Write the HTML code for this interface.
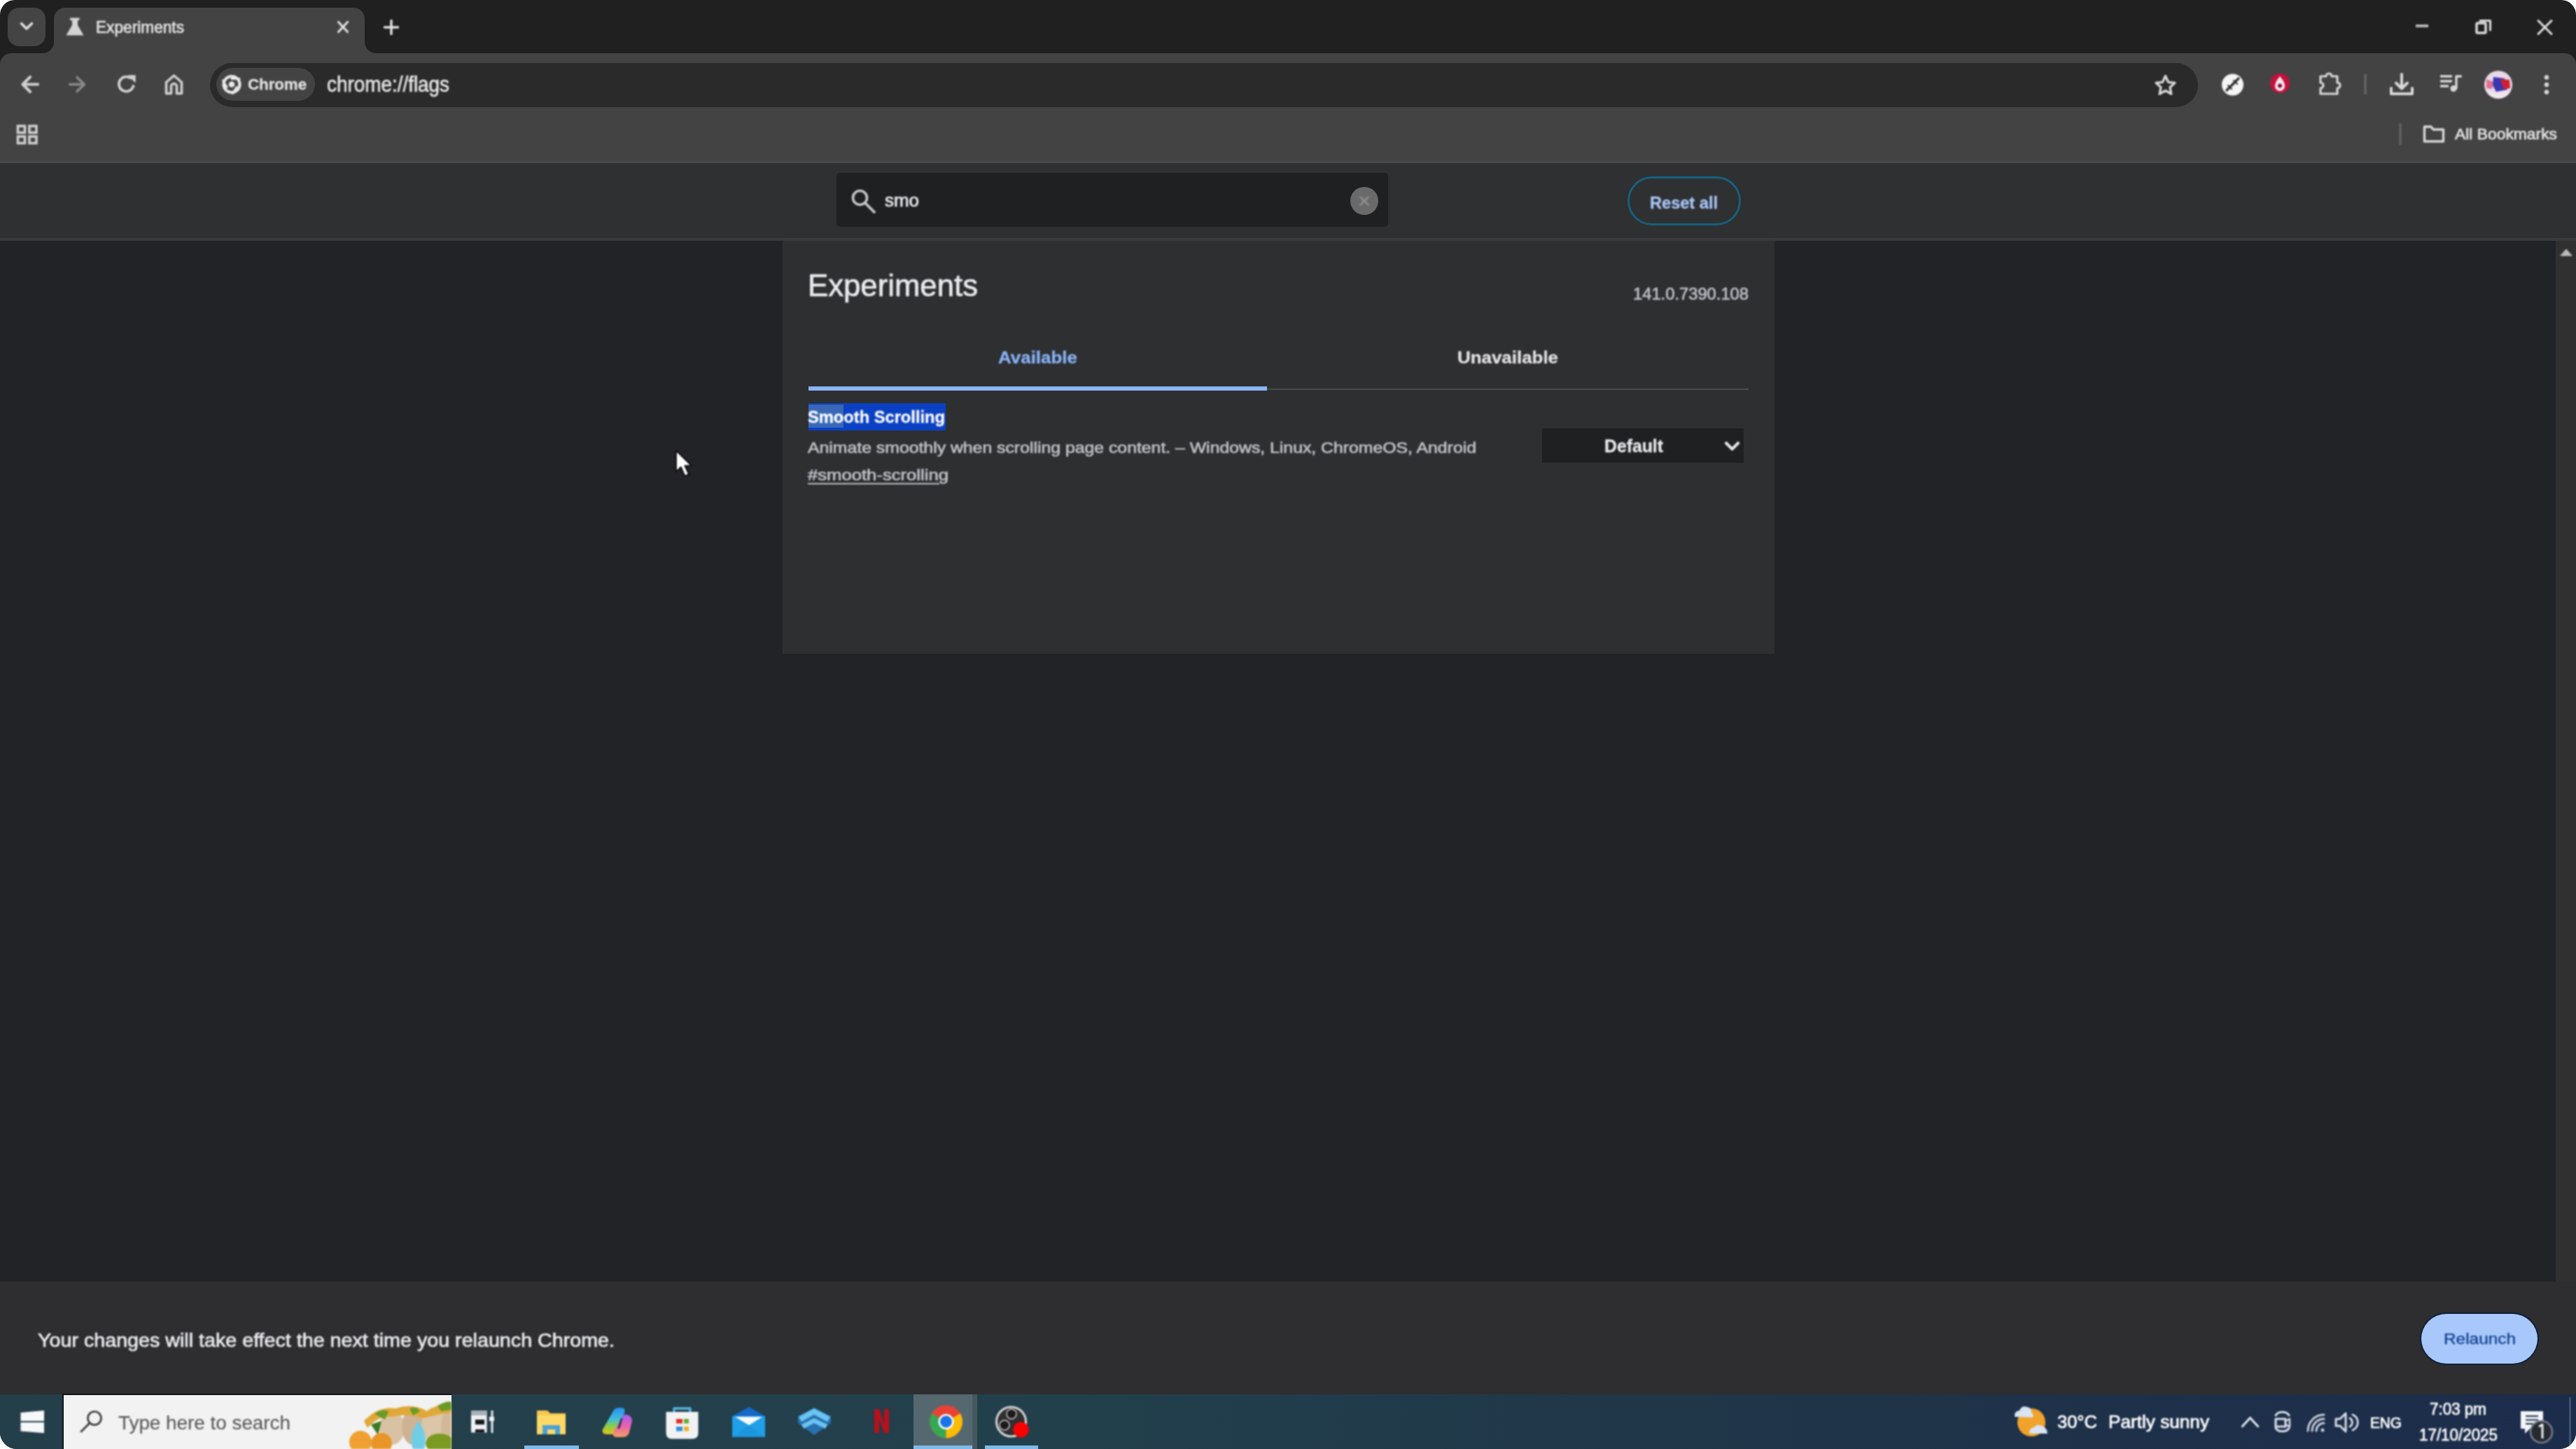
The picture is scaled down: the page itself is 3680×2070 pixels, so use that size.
<!DOCTYPE html>
<html><head><meta charset="utf-8">
<style>
html,body{margin:0;padding:0;width:3680px;height:2070px;overflow:hidden;background:#ffffff;}
.tx{position:absolute;white-space:nowrap;line-height:1;font-family:"Liberation Sans",sans-serif;transform-origin:0 0;}
.a{position:absolute;}
svg{position:absolute;overflow:visible;}
</style></head><body>
<div id="win" class="a" style="left:0;top:0;width:3680px;height:2070px;border-radius:21px 21px 24px 24px;overflow:hidden;background:#202020;">
  <!-- tab strip -->
  <!-- toolbar + bookmarks -->
  <div class="a" style="left:0;top:76px;width:3680px;height:157px;border-radius:16px 16px 0 0;background:#434343;"></div>
  <!-- active tab -->
  <div class="a" style="left:77px;top:11px;width:444px;height:70px;border-radius:16px 16px 0 0;background:#434343;"></div>
  <div class="a" style="left:61px;top:60px;width:16px;height:17px;background:#434343;"></div>
  <div class="a" style="left:45px;top:44px;width:32px;height:32px;border-radius:0 0 16px 0;background:#202020;"></div>
  <div class="a" style="left:521px;top:60px;width:16px;height:17px;background:#434343;"></div>
  <div class="a" style="left:521px;top:44px;width:32px;height:32px;border-radius:0 0 0 16px;background:#202020;"></div>
  <div class="a" style="left:11px;top:11px;width:54px;height:55px;border-radius:16px;background:#444444;"></div>
  <!-- omnibox -->
  <div class="a" style="left:300px;top:90px;width:2840px;height:63px;border-radius:32px;background:#2a2a2a;"></div>
  <div class="a" style="left:309px;top:97px;width:141px;height:47px;border-radius:24px;background:#434343;"></div>

  <!-- page header -->
  <div class="a" style="left:0;top:230px;width:3680px;height:3px;background:#484848;"></div>
  <div class="a" style="left:0;top:233px;width:3680px;height:108px;background:#2f3032;"></div>
  <div class="a" style="left:0;top:340px;width:3680px;height:3.5px;background:#39393b;"></div>
  <div class="a" style="left:1195px;top:247px;width:788px;height:77px;border-radius:5px;background:#1f2022;"></div>
  <div class="a" style="left:1929px;top:267px;width:40px;height:40px;border-radius:50%;background:#6a6a6a;"></div>
  <div class="a" style="left:2325px;top:252px;width:156px;height:64px;border-radius:36px;border:3px solid #16607e;"></div>

  <!-- body -->
  <div class="a" style="left:0;top:343.5px;width:3651px;height:1487.5px;background:#222327;"></div>
  <div class="a" style="left:3651px;top:343.5px;width:29px;height:1487.5px;background:#303030;"></div>
  <!-- card -->
  <div class="a" style="left:1118px;top:343.5px;width:1417px;height:590.5px;background:#2e2f31;"></div>
  <div class="a" style="left:1155px;top:552px;width:655px;height:6px;background:#8ab4f8;"></div>
  <div class="a" style="left:1810px;top:555px;width:688px;height:2px;background:#4a4b4e;"></div>
  <div class="a" style="left:1155px;top:576px;width:196px;height:39px;background:#0a40c2;"></div>
  <div class="a" style="left:1155px;top:578px;width:50px;height:33px;background:#3767b6;"></div>
  <div class="a" style="left:2203px;top:612px;width:288px;height:49px;background:#1f2022;"></div>

  <!-- relaunch bar -->
  <div class="a" style="left:0;top:1831px;width:3680px;height:161px;background:#2e2e30;"></div>
  <div class="a" style="left:3459px;top:1877px;width:166px;height:71px;border-radius:36px;background:#a8c7fa;box-shadow:0 0 0 2px #10203a;"></div>

  <!-- taskbar -->
  <div class="a" style="left:0;top:1992px;width:3680px;height:78px;background:linear-gradient(90deg,#243f4a 0%,#22404c 40%,#1f3448 70%,#1c2c4b 100%);"></div>
  <div class="a" style="left:89px;top:1991px;width:556px;height:79px;background:#0e1418;"></div>
  <div class="a" style="left:91px;top:1993px;width:554px;height:77px;background:#f2f2f2;"></div>
  <div class="a" style="left:1305px;top:1992px;width:84px;height:78px;background:#56686f;"></div>
  <div class="a" style="left:1305px;top:2065px;width:84px;height:5px;background:#7fbbe8;"></div>
  <div class="a" style="left:749px;top:2065px;width:78px;height:5px;background:#7fbbe8;"></div>
  <div class="a" style="left:1407px;top:2065px;width:76px;height:5px;background:#7fbbe8;"></div>
  <div class="a" style="left:3670px;top:1996px;width:3px;height:74px;background:#3c5170;"></div>
  <div class="a" style="left:1389px;top:1992px;width:7px;height:78px;background:#46585f;"></div>
</div>
<div id="fx" style="position:absolute;left:0;top:0;width:3680px;height:2070px;filter:blur(0.8px);">
<svg width="3680" height="2070" viewBox="0 0 3680 2070" style="position:absolute;left:0;top:0;">
 <g fill="none" stroke-linecap="round" stroke-linejoin="round">
  <!-- tab dropdown chevron -->
  <path d="M30.5 33.5 L38 41 L45.5 33.5" stroke="#e3e3e3" stroke-width="3.5"/>
  <!-- tab close -->
  <path d="M483.5 31.5 L496.5 45.5 M496.5 31.5 L483.5 45.5" stroke="#e0e0e0" stroke-width="3.2"/>
  <!-- new tab -->
  <path d="M559 29.5 V48.5 M549.5 39 H568.5" stroke="#e0e0e0" stroke-width="3.5"/>
  <!-- window controls -->
  <path d="M3451 37 H3469" stroke="#b8b8b8" stroke-width="4" stroke-linecap="butt"/>
  <rect x="3538" y="33" width="13" height="14" stroke="#dcdcdc" stroke-width="3.5" rx="1.5"/>
  <path d="M3543 29.5 H3557.5 V43" stroke="#dcdcdc" stroke-width="3"/>
  <path d="M3626 29.5 L3645 48.5 M3645 29.5 L3626 48.5" stroke="#e0e0e0" stroke-width="3"/>
  <!-- back / forward -->
  <path d="M54 120.5 H33 M43 110 L32.5 120.5 L43 131" stroke="#d0d0d0" stroke-width="4.2"/>
  <path d="M99.5 120.5 H120 M110 110.5 L120.5 120.5 L110 130.5" stroke="#8a8a8a" stroke-width="3.6"/>
  <!-- reload -->
  <path d="M190.5 123 A10.5 10.5 0 1 1 186.5 111.5" stroke="#d0d0d0" stroke-width="3.8"/>
  <path d="M184 108 L193 108 L193 117 Z" fill="#d0d0d0" stroke="#d0d0d0" stroke-width="1.5"/>
  <!-- home -->
  <path d="M237.5 133.5 V117.5 L248.5 108 L259.5 117.5 V133.5 H252.5 V123.5 A4 4 0 0 0 244.5 123.5 V133.5 Z" stroke="#d0d0d0" stroke-width="3.6"/>
  <!-- chrome chip logo -->
  <circle cx="331" cy="120.5" r="11.5" stroke="#e8e8e8" stroke-width="4.2"/>
  <circle cx="331" cy="120.5" r="4.3" fill="#e8e8e8" stroke="none"/>
  <path d="M331 112.5 H342 M324 124.5 L318.5 115 M338 124.5 L332.5 133.5" stroke="#e8e8e8" stroke-width="3"/>
  <!-- star -->
  <path d="M3093.5 108.5 L3097.6 117.3 L3107 118.4 L3100 124.8 L3101.9 134.2 L3093.5 129.4 L3085.1 134.2 L3087 124.8 L3080 118.4 L3089.4 117.3 Z" stroke="#d8d8d8" stroke-width="3.3"/>
  <!-- ext 1 white circle -->
  <circle cx="3189.5" cy="121" r="15.5" fill="#f4f4f4" stroke="none"/>
  <path d="M3181 129 L3185 125 M3187 123 L3192 118 M3194 116 L3198 112" stroke="#2a2a2a" stroke-width="3.2"/>
  <path d="M3183 122 L3188 127 M3191 115 L3196 120" stroke="#2a2a2a" stroke-width="2"/>
  <!-- ext 2 red -->
  <circle cx="3257" cy="119" r="14" fill="#c4103c" stroke="none"/>
  <path d="M3257 109 C3252 115 3250 119 3250 123 A7 7 0 0 0 3264 123 C3264 119 3262 115 3257 109 Z" fill="#f8e8ee" stroke="none"/>
  <circle cx="3257" cy="122.5" r="3" fill="#801030" stroke="none"/>
  <!-- puzzle -->
  <path d="M3315 109 H3323 A4 4 0 0 1 3331 109 H3339 V118 A4 4 0 0 1 3339 126 V134 H3315 V126 A4 4 0 0 0 3315 118 Z" stroke="#d8d8d8" stroke-width="3.2"/>
  <!-- separator -->
  <path d="M3379 106 V135" stroke="#6a6a6a" stroke-width="3" stroke-linecap="butt"/>
  <!-- download -->
  <path d="M3431 106 V126 M3423 118.5 L3431 126.5 L3439 118.5" stroke="#d8d8d8" stroke-width="4"/>
  <path d="M3416 126 V134 H3446 V126" stroke="#d8d8d8" stroke-width="4"/>
  <!-- media -->
  <path d="M3486 109 H3503 M3486 116 H3503 M3486 123 H3498" stroke="#d8d8d8" stroke-width="3.6" stroke-linecap="butt"/>
  <path d="M3509 126 V109 H3515.5" stroke="#d8d8d8" stroke-width="3.4"/>
  <circle cx="3505" cy="126.5" r="4.5" fill="#d8d8d8" stroke="none"/>
  <!-- avatar -->
  <circle cx="3569" cy="121" r="20" fill="#e8d8e8" stroke="none"/>
  <path d="M3551 128 A20 20 0 0 0 3587 130 L3580 131 L3565 133 Z" fill="#f0e6ee" stroke="none"/>
  <path d="M3552 113 L3562 117 L3560 127 L3552 126 Z" fill="#e07090" stroke="none"/>
  <path d="M3562 110 L3578 112 L3582 128 L3566 131 L3561 122 Z" fill="#3838b0" stroke="none"/>
  <path d="M3572 113 L3585 114 L3586 126 L3576 127 Z" fill="#d02030" stroke="none"/>
  <!-- menu dots -->
  <circle cx="3638" cy="110.5" r="3.2" fill="#d8d8d8" stroke="none"/>
  <circle cx="3638" cy="121" r="3.2" fill="#d8d8d8" stroke="none"/>
  <circle cx="3638" cy="131.5" r="3.2" fill="#d8d8d8" stroke="none"/>
  <!-- apps grid -->
  <rect x="25.5" y="180" width="10" height="9.5" stroke="#cfcfcf" stroke-width="3.6" stroke-linejoin="miter"/>
  <rect x="42" y="180" width="10" height="9.5" stroke="#cfcfcf" stroke-width="3.6" stroke-linejoin="miter"/>
  <rect x="25.5" y="195" width="10" height="9.5" stroke="#cfcfcf" stroke-width="3.6" stroke-linejoin="miter"/>
  <rect x="42" y="195" width="10" height="9.5" stroke="#cfcfcf" stroke-width="3.6" stroke-linejoin="miter"/>
  <!-- bookmarks sep + folder -->
  <path d="M3429 176 V207" stroke="#666666" stroke-width="3" stroke-linecap="butt"/>
  <path d="M3463.5 202 V181 H3473 L3476 185 H3490.5 V202 Z" stroke="#d8d8d8" stroke-width="3.4"/>

  <!-- page: search icon -->
  <circle cx="1228.5" cy="282.5" r="10" stroke="#c8c8c8" stroke-width="3.6"/>
  <path d="M1236 290 L1249 303" stroke="#c8c8c8" stroke-width="3.8"/>
  <!-- clear x -->
  <path d="M1943.5 281.5 L1954.5 292.5 M1954.5 281.5 L1943.5 292.5" stroke="#8e8e8e" stroke-width="2.6"/>
  <!-- select chevron -->
  <path d="M2466 633 L2474.5 641.5 L2483 633" stroke="#e8eaed" stroke-width="4.2"/>
  <!-- scrollbar up arrow -->
  <path d="M3658 365 L3666 356 L3674 365 Z" fill="#b8b8b8" stroke="#b8b8b8" stroke-width="1"/>

  <!-- taskbar: windows logo -->
  <path d="M29.5 2018 L63 2015 V2030 H29.5 Z M29.5 2032 H63 V2047.3 L29.5 2044.5 Z" fill="#f6f8fa" stroke="none"/>
  <!-- search magnifier -->
  <circle cx="135" cy="2026" r="9.5" stroke="#3a3a3a" stroke-width="2.6"/>
  <path d="M128 2033 L116 2045" stroke="#3a3a3a" stroke-width="2.8"/>
  <!-- task view -->
  <rect x="673" y="2015" width="22.5" height="31.5" fill="#eef0f4" stroke="none"/>
  <rect x="673" y="2015" width="22.5" height="7" fill="#a8b0b8" stroke="none"/>
  <rect x="679" y="2028" width="13" height="7" fill="#141a20" stroke="none"/>
  <rect x="679" y="2042" width="13" height="4.5" fill="#141a20" stroke="none"/>
  <rect x="701.5" y="2015" width="3" height="32" fill="#e8eef2" stroke="none"/>
  <rect x="699" y="2024" width="7" height="6" fill="#eef2f4" stroke="none"/>
  <!-- explorer -->
  <path d="M767 2015 H782 L786 2019 H808 V2049 H767 Z" fill="#f5c84c" stroke="none"/>
  <path d="M767 2022 H808 V2049 H767 Z" fill="#ffd966" stroke="none"/>
  <path d="M775 2049 V2036 H800 V2049 H793 V2042 H782 V2049 Z" fill="#4aa0d8" stroke="none"/>
  <!-- copilot -->
  <defs>
   <linearGradient id="cpl" x1="0" y1="0" x2="0" y2="1"><stop offset="0" stop-color="#2a8ff0"/><stop offset="0.45" stop-color="#40c0d8"/><stop offset="0.7" stop-color="#8ad040"/><stop offset="1" stop-color="#e8c020"/></linearGradient>
   <linearGradient id="cpr" x1="0" y1="0" x2="0" y2="1"><stop offset="0" stop-color="#a060f0"/><stop offset="0.5" stop-color="#e860b0"/><stop offset="1" stop-color="#f8a060"/></linearGradient>
  </defs>
  <path d="M876 2016 Q878 2011 884 2011 L889 2011 Q894 2012 892 2018 L882 2043 Q880 2049 874 2049 L866 2049 Q859 2048 861 2042 Z" fill="url(#cpl)" stroke="none"/>
  <path d="M888 2025 Q890 2020 896 2021 Q903 2023 903 2030 L899 2046 Q897 2053 890 2053 L880 2053 Q874 2052 876 2046 Z" fill="url(#cpr)" stroke="none"/>
  <path d="M884 2040 L888 2027" stroke="#1a3040" stroke-width="2.5"/>
  <!-- store -->
  <path d="M963 2017 V2012 H986 V2017" stroke="#5ab4e0" stroke-width="3.4"/>
  <path d="M951.5 2017 H997.5 V2047 Q997.5 2055.5 989 2055.5 H960 Q951.5 2055.5 951.5 2047 Z" fill="#f2f2f4" stroke="none"/>
  <rect x="966" y="2027" width="9" height="6.5" fill="#e03020" stroke="none"/>
  <rect x="977" y="2027" width="7" height="6.5" fill="#60b030" stroke="none"/>
  <rect x="966" y="2038" width="9" height="6.5" fill="#3090d8" stroke="none"/>
  <rect x="977" y="2038" width="7" height="6.5" fill="#f0b020" stroke="none"/>
  <!-- mail -->
  <path d="M1046 2023 L1070 2010 L1093 2023 Z" fill="#1468c8" stroke="none"/>
  <rect x="1046" y="2023" width="47" height="30" fill="#20a0e8" stroke="none"/>
  <path d="M1050 2024 H1089 L1070 2036 Z" fill="#f8fbff" stroke="none"/>
  <path d="M1070 2036 L1093 2053 H1046 Z" fill="#1c90d8" stroke="none" opacity="0.6"/>
  <!-- layered blue -->
  <path d="M1163 2011 L1187 2023 V2033 L1163 2050 L1140 2033 V2023 Z" fill="#2a6fb0" stroke="none"/>
  <path d="M1141 2024 L1163 2012 L1186 2024 L1182 2031 L1163 2021 L1145 2031 Z" fill="#6ac4f0" stroke="none"/>
  <path d="M1145 2035 L1163 2026 L1182 2035 L1179 2041 L1163 2033 L1148 2041 Z" fill="#6ac4f0" stroke="none"/>
  <!-- netflix -->
  <path d="M1249 2013 H1256 L1263 2034 V2013 H1270 V2047 H1263 L1256 2026 V2047 H1249 Z" fill="#b8101c" stroke="none"/>
  <!-- chrome color icon -->
  <circle cx="1351.5" cy="2031" r="23.5" fill="#e94235" stroke="none"/>
  <path d="M1351.5 2031 L1331.2 2019.25 A23.5 23.5 0 0 0 1351.5 2054.5 Z" fill="#34a853" stroke="none"/>
  <path d="M1351.5 2031 L1351.5 2054.5 A23.5 23.5 0 0 0 1371.8 2019.25 Z" fill="#fbbc04" stroke="none"/>
  <circle cx="1351.5" cy="2031" r="11" fill="#ffffff" stroke="none"/>
  <circle cx="1351.5" cy="2031" r="8.5" fill="#1a73e8" stroke="none"/>
  <!-- obs -->
  <circle cx="1444.5" cy="2031" r="21" fill="#302e31" stroke="#d8d8d8" stroke-width="3"/>
  <circle cx="1445" cy="2020" r="7" fill="#1a1a1a" stroke="#cccccc" stroke-width="1.5"/>
  <circle cx="1435" cy="2036" r="7" fill="#1a1a1a" stroke="#cccccc" stroke-width="1.5"/>
  <circle cx="1458.5" cy="2042.5" r="11" fill="#ff0000" stroke="none"/>
  <!-- weather -->
  <circle cx="2902" cy="2032" r="20" fill="#f0a22a" stroke="none"/>
  <path d="M2878 2024 Q2877 2016 2885 2015 Q2888 2007 2896 2010 Q2903 2011 2902 2018 Q2906 2020 2904 2025 Z" fill="#d8e4f2" stroke="none"/>
  <path d="M2899 2048 Q2898 2040 2906 2039 Q2910 2033 2917 2037 Q2925 2040 2925 2048 Z" fill="#d8e4f2" stroke="none"/>
  <!-- caret -->
  <path d="M3203.5 2037.5 L3214.5 2025.5 L3225.5 2037.5" stroke="#dde2ee" stroke-width="3.2"/>
  <!-- meet icon -->
  <path d="M3251 2022 A10 7 0 0 1 3270 2022 M3251 2040 A10 7 0 0 0 3270 2040" stroke="#d8dce8" stroke-width="3"/>
  <rect x="3251" y="2027" width="14" height="11" stroke="#d8dce8" stroke-width="3.2"/>
  <path d="M3265 2030 L3271 2027 V2038 L3265 2035" stroke="#d8dce8" stroke-width="2.5"/>
  <!-- network -->
  <path d="M3297 2044 A23 23 0 0 1 3320 2021 M3303 2044 A17 17 0 0 1 3320 2027 M3309 2044 A11 11 0 0 1 3320 2033" stroke="#c8ccd8" stroke-width="3"/>
  <circle cx="3318" cy="2043" r="2.5" fill="#c8ccd8" stroke="none"/>
  <!-- speaker -->
  <path d="M3337 2027 H3343 L3351 2019 V2045 L3343 2037 H3337 Z" stroke="#d8dce8" stroke-width="3"/>
  <path d="M3357 2026 A7 7 0 0 1 3357 2038 M3361 2021 A12 12 0 0 1 3361 2043" stroke="#d8dce8" stroke-width="2.8"/>
  <!-- notification -->
  <path d="M3601 2016 H3633 V2041 H3614 L3607 2048 V2041 H3601 Z" fill="#f4f6fa" stroke="none"/>
  <path d="M3608 2023 H3626 M3608 2028.5 H3626 M3608 2034 H3620" stroke="#1a2a48" stroke-width="2.2" stroke-linecap="butt"/>
  <circle cx="3630.5" cy="2045.5" r="15.5" fill="#262a30" stroke="#7a8090" stroke-width="2.5"/>
  <path d="M3627 2038 L3632 2035 V2055" stroke="#f0f0f0" stroke-width="3" stroke-linecap="butt"/>
  <!-- flask -->
  <path d="M100 25.5 H113.5 V29 H111 V36 L119.5 50.5 H94.5 L103 36 V29 H100 Z" fill="#d4d4d4" stroke="none"/>
  <!-- search box decorative image -->
  <clipPath id="dc"><rect x="497" y="1993" width="148" height="77"/></clipPath>
  <g stroke="none" clip-path="url(#dc)">
   <ellipse cx="560" cy="2040" rx="18" ry="24" fill="#d9c2a4"/>
   <ellipse cx="590" cy="2038" rx="16" ry="26" fill="#cdb394"/>
   <ellipse cx="622" cy="2036" rx="20" ry="26" fill="#dcc6a8"/>
   <ellipse cx="640" cy="2040" rx="10" ry="26" fill="#d2b898"/>
   <path d="M520 2030 Q540 2008 565 2012 Q590 2004 610 2016 Q630 2003 645 2005 V2018 Q625 2020 605 2026 Q580 2018 560 2024 Q540 2022 525 2040 Z" fill="#e0a838"/>
   <path d="M535 2020 Q545 2012 555 2016 L550 2028 Z M585 2012 Q595 2008 600 2016 L590 2022 Z M625 2008 Q640 2000 645 2003 V2014 L630 2016 Z" fill="#6a9a28"/>
   <path d="M530 2035 L545 2030 L540 2050 Z" fill="#3a7a20"/>
   <circle cx="515" cy="2060" r="16" fill="#f0a030"/>
   <circle cx="545" cy="2062" r="15" fill="#e89528"/>
   <path d="M590 2070 Q582 2050 598 2030 Q612 2050 606 2070 Z" fill="#70cde6"/>
   <ellipse cx="628" cy="2062" rx="20" ry="14" fill="#7a9a22"/>
  </g>
 </g>
</svg>

<div id="t_tab" class="tx" style="left:137.0px;top:27.9px;font-size:23.20px;font-weight:400;color:#e3e3e3;-webkit-text-stroke:0.7px #e3e3e3;transform:scaleX(0.9777);">Experiments</div>
<div id="t_chip" class="tx" style="left:354.0px;top:110.4px;font-size:21.94px;font-weight:700;color:#e3e3e3;-webkit-text-stroke:0.3px #e3e3e3;transform:scaleX(1.0134);">Chrome</div>
<div id="t_url" class="tx" style="left:467.0px;top:105.2px;font-size:31.09px;font-weight:400;color:#e3e3e3;-webkit-text-stroke:0.7px #e3e3e3;transform:scaleX(0.8966);">chrome://flags</div>
<div id="t_allbm" class="tx" style="left:3507.0px;top:180.1px;font-size:22.95px;font-weight:400;color:#e3e3e3;-webkit-text-stroke:0.7px #e3e3e3;transform:scaleX(0.9959);">All Bookmarks</div>
<div id="t_smo" class="tx" style="left:1264.0px;top:273.9px;font-size:25.49px;font-weight:400;color:#e8eaed;-webkit-text-stroke:0.7px #e8eaed;transform:scaleX(1.0175);">smo</div>
<div id="t_reset" class="tx" style="left:2357.0px;top:277.9px;font-size:24.35px;font-weight:700;color:#a8c7fa;-webkit-text-stroke:0.3px #a8c7fa;transform:scaleX(0.9686);">Reset all</div>
<div id="t_h1" class="tx" style="left:1154.0px;top:386.1px;font-size:44.21px;font-weight:400;color:#e8eaed;-webkit-text-stroke:0.7px #e8eaed;transform:scaleX(0.9891);">Experiments</div>
<div id="t_ver" class="tx" style="left:2333.0px;top:409.4px;font-size:23.74px;font-weight:400;color:#bdc1c6;-webkit-text-stroke:0.7px #bdc1c6;transform:scaleX(1.0001);">141.0.7390.108</div>
<div id="t_avail" class="tx" style="left:1426.0px;top:498.5px;font-size:24.83px;font-weight:700;color:#8ab4f8;-webkit-text-stroke:0.3px #8ab4f8;transform:scaleX(1.0452);">Available</div>
<div id="t_unavail" class="tx" style="left:2082.0px;top:498.5px;font-size:24.81px;font-weight:700;color:#e3e3e3;-webkit-text-stroke:0.3px #e3e3e3;transform:scaleX(1.0448);">Unavailable</div>
<div id="t_name" class="tx" style="left:1154.0px;top:585.4px;font-size:23.71px;font-weight:700;color:#ffffff;-webkit-text-stroke:0.3px #ffffff;transform:scaleX(0.9989);">Smooth Scrolling</div>
<div id="t_desc" class="tx" style="left:1154.0px;top:628.2px;font-size:22.80px;font-weight:400;color:#bdc1c6;-webkit-text-stroke:0.7px #bdc1c6;transform:scaleX(1.0875);">Animate smoothly when scrolling page content. – Windows, Linux, ChromeOS, Android</div>
<div id="t_link" class="tx" style="left:1154.0px;top:667.5px;font-size:22.41px;font-weight:400;color:#bdc1c6;-webkit-text-stroke:0.7px #bdc1c6;transform:scaleX(1.1447);text-decoration:underline;text-decoration-thickness:2px;text-underline-offset:4px;">#smooth-scrolling</div>
<div id="t_default" class="tx" style="left:2292.0px;top:625.4px;font-size:24.97px;font-weight:700;color:#e8eaed;-webkit-text-stroke:0.3px #e8eaed;transform:scaleX(0.9926);">Default</div>
<div id="t_msg" class="tx" style="left:54.0px;top:1901.1px;font-size:27.59px;font-weight:400;color:#e8eaed;-webkit-text-stroke:0.7px #e8eaed;transform:scaleX(1.0397);">Your changes will take effect the next time you relaunch Chrome.</div>
<div id="t_relaunch" class="tx" style="left:3491.0px;top:1902.4px;font-size:22.60px;font-weight:400;color:#0a3c8c;-webkit-text-stroke:0.7px #0a3c8c;transform:scaleX(1.0789);-webkit-text-stroke:0.25px #0a3c8c;">Relaunch</div>
<div id="t_search" class="tx" style="left:169.0px;top:2018.9px;font-size:27.89px;font-weight:400;color:#575757;-webkit-text-stroke:0.7px #575757;transform:scaleX(0.9985);-webkit-text-stroke:0.1px #575757;">Type here to search</div>
<div id="t_temp" class="tx" style="left:2939.0px;top:2019.4px;font-size:24.97px;font-weight:400;color:#ffffff;-webkit-text-stroke:0.7px #ffffff;transform:scaleX(1.0216);">30°C</div>
<div id="t_weather" class="tx" style="left:3012.0px;top:2019.1px;font-size:25.29px;font-weight:400;color:#ffffff;-webkit-text-stroke:0.7px #ffffff;transform:scaleX(1.0352);">Partly sunny</div>
<div id="t_eng" class="tx" style="left:3386.0px;top:2021.6px;font-size:21.20px;font-weight:400;color:#ffffff;-webkit-text-stroke:0.7px #ffffff;transform:scaleX(0.9799);">ENG</div>
<div id="t_time" class="tx" style="left:3471.0px;top:2002.4px;font-size:23.74px;font-weight:400;color:#ffffff;-webkit-text-stroke:0.7px #ffffff;transform:scaleX(0.9444);">7:03 pm</div>
<div id="t_date" class="tx" style="left:3456.0px;top:2037.6px;font-size:24.05px;font-weight:400;color:#ffffff;-webkit-text-stroke:0.7px #ffffff;transform:scaleX(0.9305);">17/10/2025</div>
<svg width="3680" height="2070" style="position:absolute;left:0;top:0;"><path d="M966 644 V673.5 L972.8 667 L978.5 680 L983.8 677.5 L978.2 665.2 L987.5 665.2 Z" fill="#ffffff" stroke="#000000" stroke-width="1.6" stroke-linejoin="round"/></svg>
</div>
</body></html>
